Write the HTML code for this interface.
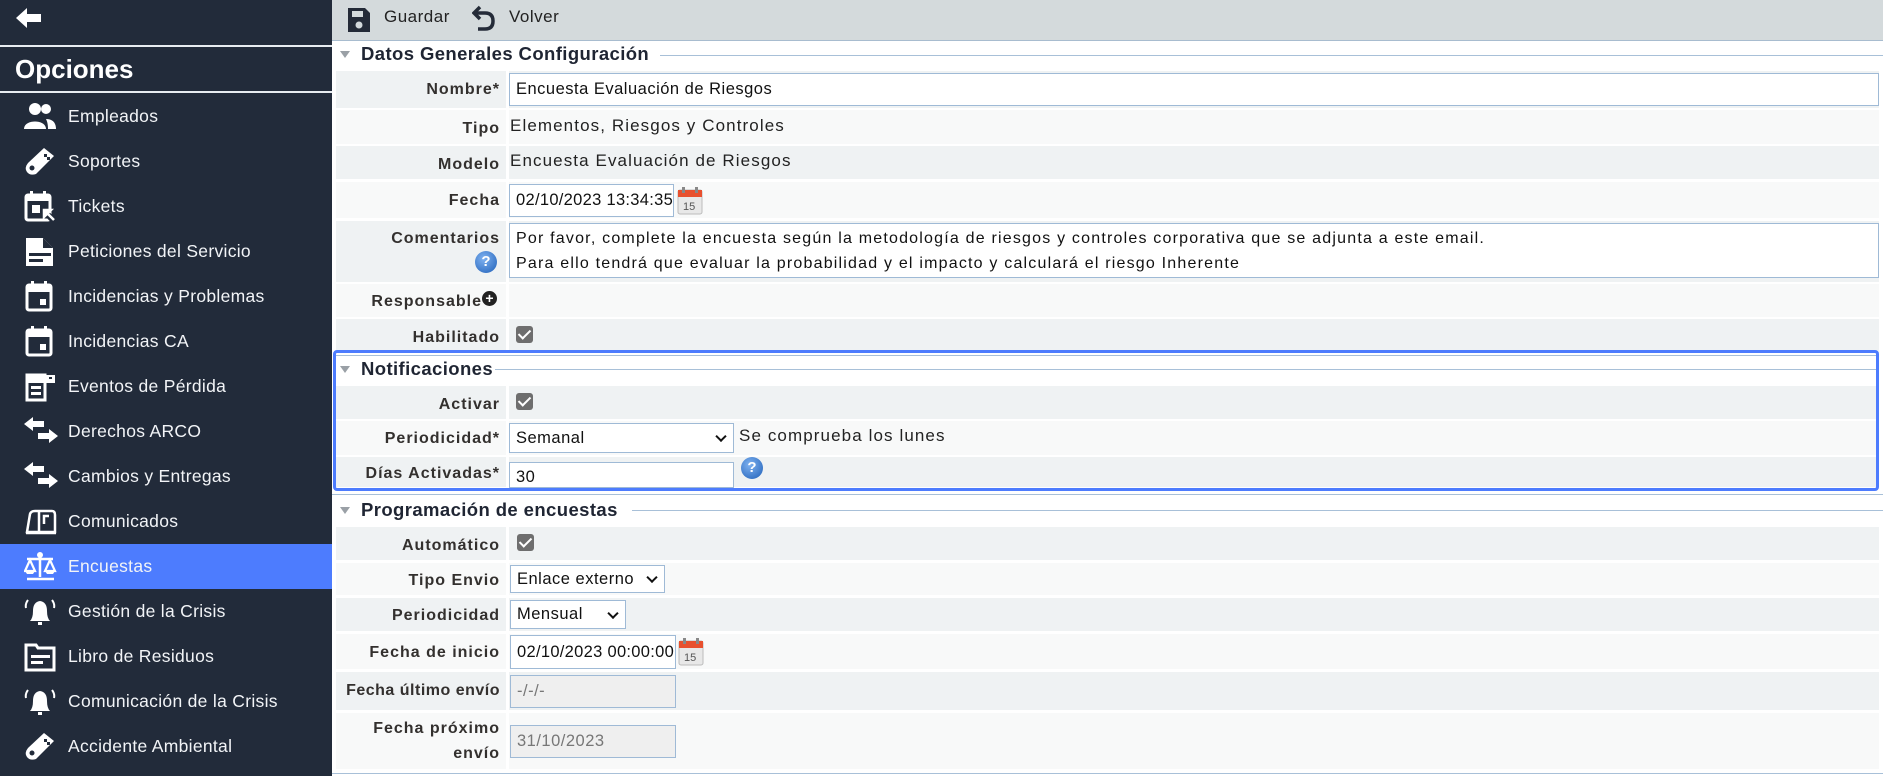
<!DOCTYPE html>
<html><head><meta charset="utf-8"><style>
*{margin:0;padding:0;box-sizing:border-box}
body{width:1883px;height:776px;overflow:hidden;background:#fff;font-family:"Liberation Sans",sans-serif;position:relative;color:#222}
.sb{position:absolute;left:0;top:0;width:332px;height:776px;background:#222b3a}
.hl{position:absolute;left:0;width:332px;height:2px;background:#e8ecf0}
.it{position:absolute;left:0;width:332px;height:45px;color:#f2f4f7;font-size:17.5px;letter-spacing:0.3px}
.it span{position:absolute;left:68px;top:12px}
.it svg{position:absolute;left:24px;top:7px}
.act{background:#4d7cfe}
.tb{position:absolute;left:332px;top:0;width:1551px;height:41px;background:#d4dadc;border-bottom:1px solid #a8bccf}
.a{position:absolute}
.sh{position:absolute;left:361px;font-weight:bold;font-size:18.5px;color:#1f2533;letter-spacing:0.4px}
.line{position:absolute;height:1px;background:#a8c0d8}
.tri{position:absolute;left:340px;width:0;height:0;border-left:5px solid transparent;border-right:5px solid transparent;border-top:7px solid #9aa0a6}
.lb{position:absolute;left:336px;width:170px;text-align:right;padding-right:6px;font-weight:bold;font-size:16px;color:#33302e;letter-spacing:1px;white-space:nowrap}
.vc{position:absolute;left:509px;right:4px}
.d{background:#eff2f3}.l{background:#f8f9f9}
.inp{position:absolute;background:#fff;border:1px solid #9fbad6;font-size:16.5px;padding-left:6px;color:#111;letter-spacing:0.5px;white-space:nowrap;overflow:hidden}
.dis{background:#efefef;color:#777}
.vt{position:absolute;font-size:17px;color:#222;letter-spacing:1.1px;white-space:nowrap}
.cb{position:absolute;width:17px;height:17px;background:#6e6e6e;border-radius:3px}
.cb:after{content:"";position:absolute;left:5px;top:1px;width:5px;height:10px;border:solid #fff;border-width:0 2.5px 2.5px 0;transform:rotate(45deg)}
.hlp{position:absolute;width:22px;height:22px;border-radius:50%;background:radial-gradient(circle at 40% 35%,#7fb2f0,#1e5fb8);color:#fff;font-weight:bold;font-size:15px;text-align:center;line-height:22px}
.chev{position:absolute;right:8px;top:50%;width:8px;height:8px;border:solid #111;border-width:0 2px 2px 0;transform:translateY(-70%) rotate(45deg)}
</style></head><body>
<div class="sb">
<svg class="a" style="left:14px;top:6px" width="30" height="24" viewBox="0 0 30 24"><path d="M2 12 L13 2 V8 H27 V16 H13 V22 Z" fill="#fff"/></svg>
<div class="hl" style="top:45px"></div>
<div class="a" style="left:15px;top:54px;color:#fff;font-weight:bold;font-size:26px">Opciones</div>
<div class="hl" style="top:91px"></div>

<div class="it" style="top:94px"><svg width="32" height="30" viewBox="0 0 32 30"><circle cx="11" cy="8" r="6" fill="#fff"/><circle cx="22" cy="8" r="5" fill="#fff"/><path d="M0 28 C0 18 22 18 22 28Z M22 18 C28 18 32 21 32 28 H24 C24 23 23 20 22 18Z" fill="#fff"/></svg><span>Empleados</span></div>
<div class="it" style="top:139px"><svg width="32" height="30" viewBox="0 0 32 30"><path d="M20 2 L30 10 L12 28 Q6 30 3 26 Q0 22 4 17Z" fill="#fff"/><circle cx="8" cy="22" r="2.5" fill="#222b3a"/><rect x="20" y="8" width="3" height="3" fill="#222b3a"/><rect x="23" y="11" width="3" height="3" fill="#222b3a"/></svg><span>Soportes</span></div>
<div class="it" style="top:184px"><svg width="32" height="32" viewBox="0 0 32 32"><rect x="2" y="4" width="24" height="25" rx="2" fill="none" stroke="#fff" stroke-width="3"/><rect x="2" y="4" width="24" height="6" fill="#fff"/><rect x="6" y="0" width="3" height="6" fill="#fff"/><rect x="19" y="0" width="3" height="6" fill="#fff"/><rect x="8" y="14" width="8" height="8" fill="#fff"/><path d="M18 18 L30 30" stroke="#222b3a" stroke-width="6"/><path d="M20 19 L27 19 L20 26Z M22 21 L30 29" stroke="#fff" fill="#fff" stroke-width="2.5"/></svg><span>Tickets</span></div>
<div class="it" style="top:229px"><svg width="32" height="32" viewBox="0 0 32 32"><path d="M2 2 H19 L29 12 V30 H2Z" fill="#fff"/><path d="M19 2 V12 H29" fill="#222b3a"/><rect x="5" y="17" width="22" height="3" fill="#222b3a"/><rect x="5" y="23" width="14" height="3" fill="#222b3a"/></svg><span>Peticiones del Servicio</span></div>
<div class="it" style="top:274px"><svg width="32" height="32" viewBox="0 0 32 32"><rect x="3" y="4" width="24" height="25" rx="2" fill="none" stroke="#fff" stroke-width="3"/><rect x="3" y="4" width="24" height="7" fill="#fff"/><rect x="7" y="0" width="3" height="6" fill="#fff"/><rect x="20" y="0" width="3" height="6" fill="#fff"/><rect x="16" y="18" width="6" height="6" fill="#fff"/></svg><span>Incidencias y Problemas</span></div>
<div class="it" style="top:319px"><svg width="32" height="32" viewBox="0 0 32 32"><rect x="3" y="4" width="24" height="25" rx="2" fill="none" stroke="#fff" stroke-width="3"/><rect x="3" y="4" width="24" height="7" fill="#fff"/><rect x="7" y="0" width="3" height="6" fill="#fff"/><rect x="20" y="0" width="3" height="6" fill="#fff"/><rect x="16" y="18" width="6" height="6" fill="#fff"/></svg><span>Incidencias CA</span></div>
<div class="it" style="top:364px"><svg width="32" height="32" viewBox="0 0 32 32"><rect x="3" y="4" width="18" height="25" fill="none" stroke="#fff" stroke-width="3"/><rect x="3" y="4" width="28" height="8" fill="#fff"/><rect x="7" y="15" width="10" height="3" fill="#fff"/><rect x="7" y="21" width="10" height="3" fill="#fff"/><rect x="25" y="6" width="3" height="2" fill="#222b3a"/></svg><span>Eventos de Pérdida</span></div>
<div class="it" style="top:409px"><svg width="34" height="32" viewBox="0 0 34 32"><path d="M0 8 L9 1 V5 H20 V11 H9 V15Z M34 20 L25 13 V17 H14 V23 H25 V27Z" fill="#fff"/></svg><span>Derechos ARCO</span></div>
<div class="it" style="top:454px"><svg width="34" height="32" viewBox="0 0 34 32"><path d="M0 8 L9 1 V5 H20 V11 H9 V15Z M34 20 L25 13 V17 H14 V23 H25 V27Z" fill="#fff"/></svg><span>Cambios y Entregas</span></div>
<div class="it" style="top:499px"><svg width="34" height="32" viewBox="0 0 34 32"><path d="M3 26 L6 8 Q7 5 11 5 H28 Q31 5 31 9 V26Z" fill="none" stroke="#fff" stroke-width="2.5"/><path d="M15 6 V26 M2 27 H32" stroke="#fff" stroke-width="2.5"/><path d="M20 18 V10 H25" stroke="#fff" stroke-width="2.5" fill="none"/></svg><span>Comunicados</span></div>
<div class="it act" style="top:544px"><svg width="34" height="32" viewBox="0 0 34 32"><circle cx="16" cy="4" r="3" fill="#fff"/><path d="M16 4 V26 M3 8 H29 M3 28 H30" stroke="#fff" stroke-width="2.5"/><path d="M6 9 L1 20 H11Z M26 9 L21 20 H31Z" fill="none" stroke="#fff" stroke-width="2.2"/><path d="M1 20 H11 L9 23 H3Z M21 20 H31 L29 23 H23Z" fill="#fff"/></svg><span>Encuestas</span></div>
<div class="it" style="top:589px"><svg width="34" height="32" viewBox="0 0 34 32"><path d="M6 25 Q9 22 9 15 Q9 6 16 5 Q23 6 23 15 Q23 22 26 25Z" fill="#fff"/><rect x="14" y="26" width="4" height="3" fill="#fff"/><path d="M4 4 Q1 8 2 12 M28 4 Q31 8 30 12" stroke="#fff" stroke-width="2" fill="none"/></svg><span>Gestión de la Crisis</span></div>
<div class="it" style="top:634px"><svg width="34" height="32" viewBox="0 0 34 32"><path d="M2 4 H12 L14 7 H30 V29 H2Z" fill="none" stroke="#fff" stroke-width="3"/><rect x="7" y="14" width="19" height="3" fill="#fff"/><rect x="7" y="20" width="12" height="3" fill="#fff"/></svg><span>Libro de Residuos</span></div>
<div class="it" style="top:679px"><svg width="34" height="32" viewBox="0 0 34 32"><path d="M6 25 Q9 22 9 15 Q9 6 16 5 Q23 6 23 15 Q23 22 26 25Z" fill="#fff"/><rect x="14" y="26" width="4" height="3" fill="#fff"/><path d="M4 4 Q1 8 2 12 M28 4 Q31 8 30 12" stroke="#fff" stroke-width="2" fill="none"/></svg><span>Comunicación de la Crisis</span></div>
<div class="it" style="top:724px"><svg width="32" height="30" viewBox="0 0 32 30"><path d="M20 2 L30 10 L12 28 Q6 30 3 26 Q0 22 4 17Z" fill="#fff"/><circle cx="8" cy="22" r="2.5" fill="#222b3a"/><rect x="20" y="8" width="3" height="3" fill="#222b3a"/><rect x="23" y="11" width="3" height="3" fill="#222b3a"/></svg><span>Accidente Ambiental</span></div>
</div>

<div class="tb"></div>
<svg class="a" style="left:347px;top:7px" width="24" height="26" viewBox="0 0 24 26"><path d="M1 1 H18 L23 6 V25 H1Z" fill="#242b38"/><rect x="5" y="4" width="11" height="6" fill="#d4dadc"/><circle cx="12" cy="18" r="3.5" fill="#d4dadc"/></svg>
<div class="a" style="left:384px;top:7px;font-size:17px;color:#222;letter-spacing:0.5px">Guardar</div>
<svg class="a" style="left:472px;top:5px" width="24" height="28" viewBox="0 0 24 28"><path d="M8 2 L2 8 L8 14" fill="none" stroke="#242b38" stroke-width="3.5"/><path d="M3 8 H13 Q21 8 21 16 Q21 24 13 24 H6" fill="none" stroke="#242b38" stroke-width="3.5"/></svg>
<div class="a" style="left:509px;top:7px;font-size:17px;color:#222;letter-spacing:0.5px">Volver</div>

<div class="tri" style="top:51px"></div>
<div class="sh" style="top:43px">Datos Generales Configuración</div>
<div class="line" style="left:660px;right:0;top:55px"></div>

<div class="lb d" style="top:71px;height:37px;line-height:37px">Nombre*</div><div class="vc d" style="top:71px;height:37px"></div>
<div class="inp" style="left:509px;right:4px;top:73px;height:33px;line-height:31px">Encuesta Evaluación de Riesgos</div>

<div class="lb l" style="top:110px;height:34px;line-height:38px">Tipo</div><div class="vc l" style="top:110px;height:34px"></div>
<div class="vt" style="left:510px;top:116px">Elementos, Riesgos y Controles</div>

<div class="lb d" style="top:146px;height:33px;line-height:37px">Modelo</div><div class="vc d" style="top:146px;height:33px"></div>
<div class="vt" style="left:510px;top:151px">Encuesta Evaluación de Riesgos</div>

<div class="lb l" style="top:182px;height:36px;line-height:38px">Fecha</div><div class="vc l" style="top:182px;height:36px"></div>
<div class="inp" style="left:509px;width:165px;top:184px;height:33px;line-height:31px;letter-spacing:0.3px">02/10/2023 13:34:35</div>

<div class="lb d" style="top:221px;height:61px;line-height:22px;padding-top:7px">Comentarios</div><div class="vc d" style="top:221px;height:61px"></div>
<div class="hlp" style="left:475px;top:251px">?</div>
<div class="inp" style="left:509px;right:4px;top:223px;height:55px;line-height:25px;padding-top:2px;font-size:16px;letter-spacing:1.2px">Por favor, complete la encuesta según la metodología de riesgos y controles corporativa que se adjunta a este email.<br>Para ello tendrá que evaluar la probabilidad y el impacto y calculará el riesgo Inherente</div>

<div class="lb l" style="top:284px;height:33px;line-height:36px;padding-right:24px">Responsable</div><div class="vc l" style="top:284px;height:33px"></div>
<div class="a" style="left:482px;top:291px;width:15px;height:15px;border-radius:50%;background:#222;color:#fff;font-size:14px;font-weight:bold;text-align:center;line-height:15px">+</div>

<div class="lb d" style="top:319px;height:34px;line-height:38px">Habilitado</div><div class="vc d" style="top:319px;height:34px"></div>
<div class="cb" style="left:516px;top:326px"></div>

<div class="a" style="left:333px;top:350px;width:1546px;height:141px;border:3px solid #4d7cfe;border-radius:4px"></div>
<div class="tri" style="top:366px"></div>
<div class="sh" style="top:358px">Notificaciones</div>
<div class="line" style="left:495px;right:7px;top:369px"></div>
<div class="line" style="left:336px;right:7px;top:355px"></div>

<div class="lb d" style="top:386px;height:33px;line-height:37px">Activar</div><div class="vc d" style="top:386px;height:33px;right:7px"></div>
<div class="cb" style="left:516px;top:393px"></div>

<div class="lb l" style="top:421px;height:34px;line-height:36px">Periodicidad*</div><div class="vc l" style="top:421px;height:34px;right:7px"></div>
<div class="inp" style="left:509px;width:225px;top:423px;height:30px;line-height:28px">Semanal<div class="chev"></div></div>
<div class="vt" style="left:739px;top:426px">Se comprueba los lunes</div>

<div class="lb d" style="top:457px;height:30px;line-height:34px">Días Activadas*</div><div class="vc d" style="top:457px;height:30px;right:7px"></div>
<div class="inp" style="left:509px;width:225px;top:462px;height:26px;line-height:28px">30</div>
<div class="hlp" style="left:741px;top:457px">?</div>

<div class="line" style="left:332px;right:0;top:494px"></div>
<div class="tri" style="top:507px"></div>
<div class="sh" style="top:499px">Programación de encuestas</div>
<div class="line" style="left:632px;right:0;top:510px"></div>

<div class="lb d" style="top:527px;height:33px;line-height:37px">Automático</div><div class="vc d" style="top:527px;height:33px"></div>
<div class="cb" style="left:517px;top:534px"></div>

<div class="lb l" style="top:563px;height:32px;line-height:36px">Tipo Envio</div><div class="vc l" style="top:563px;height:32px"></div>
<div class="inp" style="left:510px;width:155px;top:565px;height:28px;line-height:26px">Enlace externo<div class="chev"></div></div>

<div class="lb d" style="top:598px;height:33px;line-height:36px">Periodicidad</div><div class="vc d" style="top:598px;height:33px"></div>
<div class="inp" style="left:510px;width:116px;top:600px;height:29px;line-height:27px">Mensual<div class="chev"></div></div>

<div class="lb l" style="top:634px;height:35px;line-height:38px">Fecha de inicio</div><div class="vc l" style="top:634px;height:35px"></div>
<div class="inp" style="left:510px;width:166px;top:635px;height:34px;line-height:32px;letter-spacing:0.3px">02/10/2023 00:00:00</div>

<div class="lb d" style="top:672px;height:38px;line-height:38px;letter-spacing:0.5px">Fecha último envío</div><div class="vc d" style="top:672px;height:38px"></div>
<div class="inp dis" style="left:510px;width:166px;top:675px;height:33px;line-height:31px">-/-/-</div>

<div class="lb l" style="top:713px;height:56px;line-height:25px;padding-top:3px">Fecha próximo<br>envío</div><div class="vc l" style="top:713px;height:56px"></div>
<div class="inp dis" style="left:510px;width:166px;top:725px;height:33px;line-height:31px">31/10/2023</div>
<div class="line" style="left:332px;right:0;top:773px"></div>

<svg class="a" style="left:677px;top:186px" width="26" height="29" viewBox="0 0 26 29"><rect x="1" y="4" width="24" height="24" rx="2" fill="#e8e8e8" stroke="#bbb"/><rect x="1" y="4" width="24" height="7" fill="#e8502e"/><rect x="5" y="1" width="3" height="6" fill="#888"/><rect x="18" y="1" width="3" height="6" fill="#888"/><text x="6" y="24" font-size="11" font-family="Liberation Sans" fill="#555">15</text></svg>
<svg class="a" style="left:678px;top:637px" width="26" height="29" viewBox="0 0 26 29"><rect x="1" y="4" width="24" height="24" rx="2" fill="#e8e8e8" stroke="#bbb"/><rect x="1" y="4" width="24" height="7" fill="#e8502e"/><rect x="5" y="1" width="3" height="6" fill="#888"/><rect x="18" y="1" width="3" height="6" fill="#888"/><text x="6" y="24" font-size="11" font-family="Liberation Sans" fill="#555">15</text></svg>
</body></html>
